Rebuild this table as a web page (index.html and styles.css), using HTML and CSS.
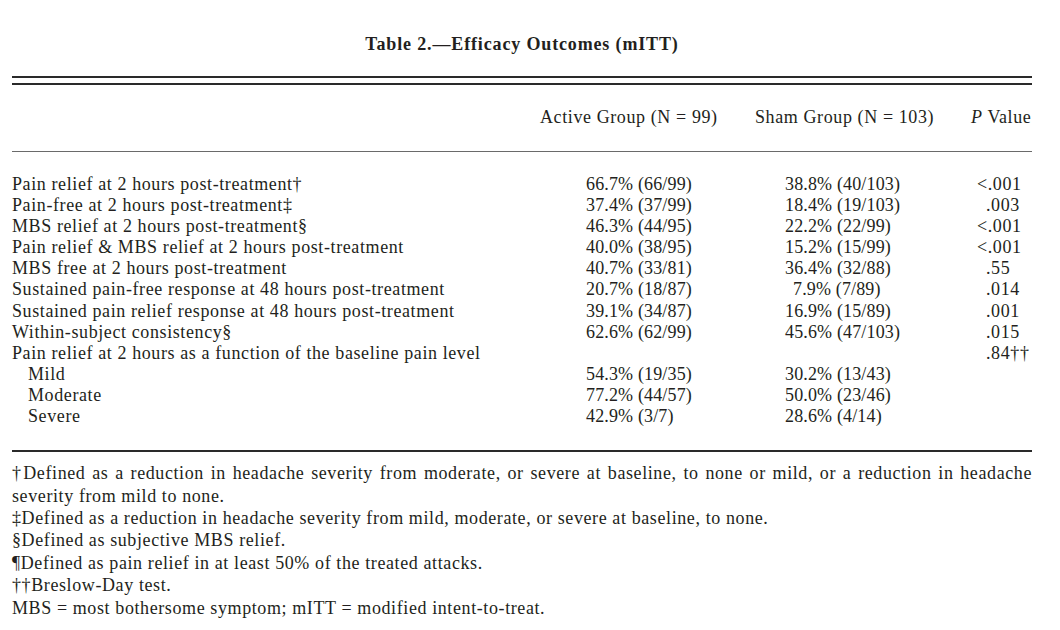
FILE: index.html
```html
<!DOCTYPE html>
<html lang="en">
<head>
<meta charset="utf-8">
<title>Table 2 — Efficacy Outcomes (mITT)</title>
<link rel="stylesheet" href="styles.css">
</head>
<body>
<div class="page">
  <h1 class="title">Table 2.—Efficacy Outcomes (mITT)</h1>
  <div class="double-rule"></div>
  <div class="head-row">
    <div></div>
    <div>Active Group (N = 99)</div>
    <div>Sham Group (N = 103)</div>
    <div><i>P</i> Value</div>
  </div>
  <div class="body">
    <div class="row"><div>Pain relief at 2 hours post-treatment†</div><div class="num">66.7% (66/99)</div><div class="num">38.8% (40/103)</div><div class="lt">&lt;.001</div></div>
    <div class="row"><div>Pain-free at 2 hours post-treatment‡</div><div class="num">37.4% (37/99)</div><div class="num">18.4% (19/103)</div><div>.003</div></div>
    <div class="row"><div>MBS relief at 2 hours post-treatment§</div><div class="num">46.3% (44/95)</div><div class="num">22.2% (22/99)</div><div class="lt">&lt;.001</div></div>
    <div class="row"><div>Pain relief &amp; MBS relief at 2 hours post-treatment</div><div class="num">40.0% (38/95)</div><div class="num">15.2% (15/99)</div><div class="lt">&lt;.001</div></div>
    <div class="row"><div>MBS free at 2 hours post-treatment</div><div class="num">40.7% (33/81)</div><div class="num">36.4% (32/88)</div><div>.55</div></div>
    <div class="row"><div>Sustained pain-free response at 48 hours post-treatment</div><div class="num">20.7% (18/87)</div><div class="num digit-pad">7.9% (7/89)</div><div>.014</div></div>
    <div class="row"><div>Sustained pain relief response at 48 hours post-treatment</div><div class="num">39.1% (34/87)</div><div class="num">16.9% (15/89)</div><div>.001</div></div>
    <div class="row"><div>Within-subject consistency§</div><div class="num">62.6% (62/99)</div><div class="num">45.6% (47/103)</div><div>.015</div></div>
    <div class="row"><div>Pain relief at 2 hours as a function of the baseline pain level</div><div></div><div></div><div>.84††</div></div>
    <div class="row"><div class="sub">Mild</div><div class="num">54.3% (19/35)</div><div class="num">30.2% (13/43)</div><div></div></div>
    <div class="row"><div class="sub">Moderate</div><div class="num">77.2% (44/57)</div><div class="num">50.0% (23/46)</div><div></div></div>
    <div class="row"><div class="sub">Severe</div><div class="num">42.9% (3/7)</div><div class="num">28.6% (4/14)</div><div></div></div>
  </div>
  <div class="notes">
    <p class="fn"><span class="fn-first">†Defined as a reduction in headache severity from moderate, or severe at baseline, to none or mild, or a reduction in headache</span>severity from mild to none.</p>
    <p class="fn">‡Defined as a reduction in headache severity from mild, moderate, or severe at baseline, to none.</p>
    <p class="fn">§Defined as subjective MBS relief.</p>
    <p class="fn">¶Defined as pain relief in at least 50% of the treated attacks.</p>
    <p class="fn">††Breslow-Day test.</p>
    <p class="fn">MBS = most bothersome symptom; mITT = modified intent-to-treat.</p>
  </div>
</div>
</body>
</html>
```

FILE: styles.css
```css
html, body {
  margin: 0;
  padding: 0;
  background: #ffffff;
}

body {
  font-family: "Liberation Serif", "Times New Roman", serif;
  color: #231f20;
  font-size: 18px;
  letter-spacing: 0.6px;
}

.page {
  width: 1020px;
  margin-left: 12px;
}

.title {
  margin: 0 0 21px;
  padding-top: 34px;
  line-height: 21px;
  font-size: 18px;
  letter-spacing: 0.85px;
  font-weight: bold;
  text-align: center;
}

.double-rule {
  height: 5px;
  border-top: 2px solid #2a2a2a;
  border-bottom: 2px solid #2a2a2a;
}

.head-row {
  display: grid;
  grid-template-columns: 528px 215px 216px 61px;
  line-height: 21px;
  padding: 22px 0 23px;
  border-bottom: 1px solid #6a6a6a;
}

.body {
  padding: 22px 0 23px;
  border-bottom: 2px solid #2a2a2a;
}

.row {
  display: grid;
  grid-template-columns: 574px 199px 201px 46px;
  line-height: 21.1px;
  height: 21.1px;
  white-space: nowrap;
}

.num {
  letter-spacing: 0.15px;
}

.sub {
  padding-left: 16px;
}

.digit-pad {
  padding-left: 8px;
}

.lt {
  margin-left: -9px;
}

.notes {
  padding-top: 10px;
}

.fn {
  margin: 0;
  line-height: 22.4px;
}

.fn-first {
  display: block;
  text-align: justify;
  text-align-last: justify;
}
```
